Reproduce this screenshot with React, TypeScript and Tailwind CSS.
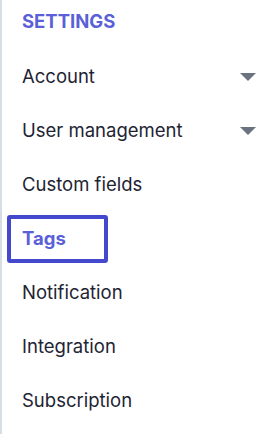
import React from 'react';

type NavItem = {
    label: string;
    expandable?: boolean;
    active?: boolean;
};

const ITEMS: NavItem[] = [
    { label: 'Account', expandable: true },
    { label: 'User management', expandable: true },
    { label: 'Custom fields' },
    { label: 'Tags', active: true },
    { label: 'Notification' },
    { label: 'Integration' },
    { label: 'Subscription' },
];

const Caret: React.FC = () => (
    <svg width="16" height="8" viewBox="0 0 16 8" className="shrink-0">
        <path d="M0 0 L16 0 L8 8 Z" fill="#6b7280" />
    </svg>
);

const App: React.FC = () => {
    return (
        <div
            className="w-[270px] h-[434px] bg-white border-l-2 border-[#d5dde5] pl-[5px]"
            style={{ fontFamily: 'Inter, "Noto Sans", sans-serif' }}
        >
            <div className="h-[50px] pt-[9px] pl-[15px] text-[18.5px] leading-6 font-bold text-[#5b5fd8]">
                SETTINGS
            </div>
            <ul className="flex flex-col gap-[6px] pt-[3px]">
                {ITEMS.map(item => (
                    <li
                        key={item.label}
                        className={
                            item.active
                                ? 'h-[48px] w-[101px] flex items-center px-[11px] border-4 border-[#4448cc] rounded-[3px] text-[18.5px] font-bold text-[#5b5fd8]'
                                : 'h-[48px] flex items-center justify-between pl-[11px] pr-[10px] border-4 border-transparent text-[18.5px] text-[#1e2433]'
                        }
                    >
                        <span>{item.label}</span>
                        {item.expandable && <Caret />}
                    </li>
                ))}
            </ul>
        </div>
    );
};

export default App;
